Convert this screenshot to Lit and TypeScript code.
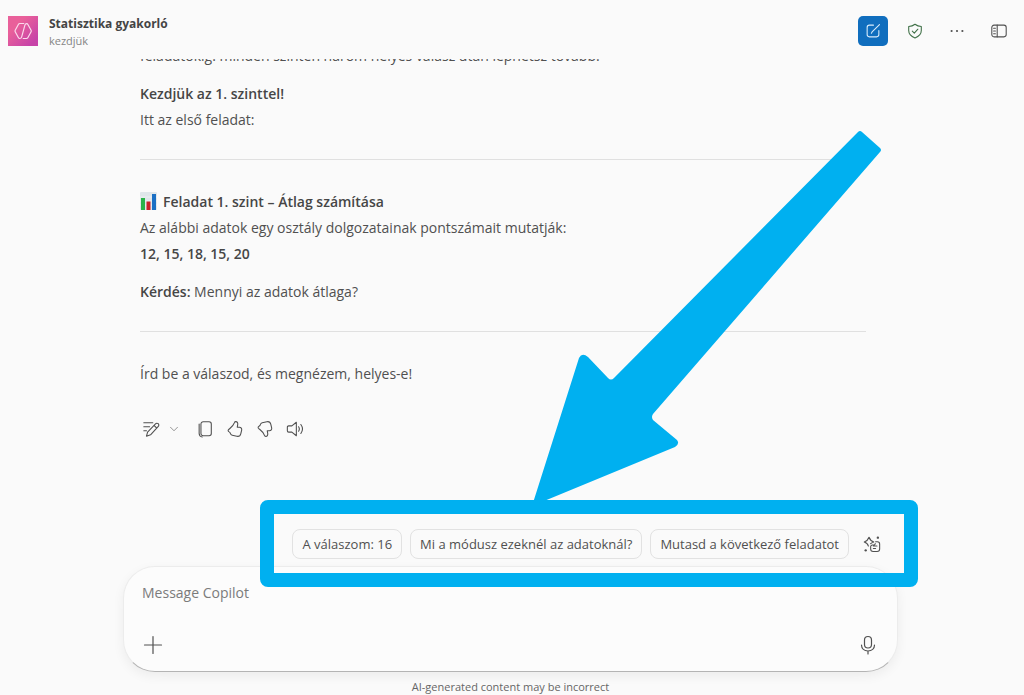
import { LitElement, html, svg, css } from "lit";
import { customElement, state } from "lit/decorators.js";

const stroke = (body: unknown, size = 20) => html`<svg class="icon" width=${size} height=${size} viewBox="0 0 20 20" aria-hidden="true">${body}</svg>`;

const icons = {
  compose: stroke(svg`<path d="M10.500 3.500H6A2.500 2.500 0 0 0 3.500 6v8A2.500 2.500 0 0 0 6 16.500h8a2.500 2.500 0 0 0 2.500-2.500V9.500M9 11l8.200-8.200M9 11l-.8 1.400"/>`, 18),
  shield: stroke(svg`<path d="M10 2.500c2 1.500 4.200 2.300 7 2.500v4.500c0 4-2.500 6.500-7 8.200-4.500-1.700-7-4.200-7-8.200V5c2.800-.2 5-1 7-2.500z"/><path d="M7 10.200l2.200 2.100 4-4.300"/>`, 18),
  more: stroke(svg`<g class="solid"><circle cx="4" cy="10" r="1.200"/><circle cx="10" cy="10" r="1.200"/><circle cx="16" cy="10" r="1.200"/></g>`, 18),
  panel: stroke(svg`<rect x="2" y="3.500" width="16" height="13" rx="2.500"/><path d="M8 3.500v13M4 7h2M4 10h2M4 13h2"/>`, 18),
  edit: stroke(svg`<path d="M2 3h10M2 7.500h6.500M2 12h3M5 18l1.200-4.500L15 4.200a2.100 2.100 0 0 1 3.100 2.900L9.500 16.500zM13.300 6l3 2.900"/>`, 18),
  chevron: stroke(svg`<path d="M3 6.500l7 7 7-7"/>`, 10),
  copy: stroke(svg`<rect x="5.500" y="2" width="11.500" height="15.500" rx="2.500"/><path d="M3.500 4.500v10.500A4 4 0 0 0 7 18.800"/>`, 18),
  up: stroke(svg`<path d="M10.800 1.800c1.900 0 2.500 1.800 2.200 3.500l-.5 2.700h2.300c1.900 0 3 1.500 2.600 3.300l-1 4c-.5 2-2.200 3.200-4.300 2.800l-5.200-1.200c-1.200-.3-1.700-1-2.100-2.100-.4-1-.8-1.400-1.700-1.900-.8-.5-1-1.500-.3-2.200C6 8 8.300 6.500 9.400 3c.2-.7.600-1.200 1.400-1.200z"/>`, 18),
  down: stroke(svg`<path d="M10.800 18.200c1.900 0 2.500-1.800 2.200-3.500l-.5-2.700h2.300c1.900 0 3-1.500 2.600-3.300l-1-4c-.5-2-2.200-3.200-4.300-2.800L6.900 3.100c-1.200.3-1.700 1-2.100 2.100-.4 1-.8 1.400-1.700 1.900-.8.500-1 1.500-.3 2.200C6 12 8.300 13.500 9.400 17c.2.700.600 1.200 1.400 1.200z"/>`, 18),
  speaker: stroke(svg`<path d="M11.500 2.500v15L6.500 13.500H3A1.500 1.500 0 0 1 1.500 12V8A1.500 1.500 0 0 1 3 6.500h3.500zM14 7.500c1 1.500 1 3.500 0 5M16.500 5c2.200 3 2.200 7 0 10"/>`, 18),
  plus: stroke(svg`<path d="M10 1.500v17M1.500 10h17"/>`, 20),
  mic: stroke(svg`<rect x="6.500" y="1.500" width="7" height="11.500" rx="3.500"/><path d="M3.500 10c0 3.700 2.800 6 6.500 6s6.500-2.300 6.500-6M10 16v3"/>`, 20),
  sparkle: stroke(svg`<path d="M6 12.300c-.6-2.600-1.700-3.600-4.600-4.600 2.900-1 4.300-2.300 5.300-5.200 1 2.900 2.300 4.200 5.300 5.200-1.700.6-2.700 1-3.500 1.900M14 7.500h2a2.500 2.500 0 0 1 2.500 2.500v5.500A2.800 2.800 0 0 1 15.700 18.300h-4.400A2.800 2.800 0 0 1 8.500 15.500V13a1.800 1.800 0 0 1 1.800-1.800h1.500a1.800 1.800 0 0 0 1.800-1.800M11.500 12.300h4M11.500 15h2.500"/><g class="solid"><circle cx="16.500" cy="3" r="1.300"/><circle cx="3" cy="17" r="1.300"/></g>`, 18),
};

const logo = html`<svg class="logo" viewBox="0 0 30 30" aria-hidden="true">
  <defs><linearGradient id="pink" x1="0" y1="0" x2="1" y2="1"><stop offset=".3" stop-color="#e9609a"/><stop offset=".85" stop-color="#c743a8"/></linearGradient></defs>
  <rect width="30" height="30" fill="url(#pink)"/>
  <path d="M15.800 7.500h-4a1.500 1.500 0 0 0-1.300.8l-3.300 6a1.500 1.500 0 0 0 0 1.400l3.300 6a1.500 1.500 0 0 0 1.300.8c1 0 1.500-.5 1.800-1.400l3.300-12c.3-.9.800-1.400 1.700-1.400a1.500 1.500 0 0 1 1.300.8l3.200 5.800a1.500 1.500 0 0 1 0 1.400l-3.300 6a1.500 1.500 0 0 1-1.300.8h-3.300" fill="none" stroke="#fbd9ec" stroke-width="1.200" stroke-linecap="round"/>
</svg>`;

const chart = html`<svg class="chart" viewBox="0 0 17 18" role="img" aria-label="oszlopdiagram">
  <rect width="17" height="18" rx="1" fill="#dfe6ea"/>
  <path d="M0 5h17M0 9h17M0 13h17" stroke="#f0f3f5" stroke-width=".8"/>
  <rect x="1" y="6" width="4" height="12" fill="#2bb34a"/><rect x="6.500" y="9.500" width="4" height="8.500" fill="#cc2229"/><rect x="12" y="2" width="4" height="16" fill="#1a6fc4"/>
</svg>`;

@customElement("app-root")
export class AppRoot extends LitElement {
  @state() private draft = "";

  private suggestions = ["A válaszom: 16", "Mi a módusz ezeknél az adatoknál?", "Mutasd a következő feladatot"];

  static styles = css`
    :host {
      display: flex; flex-direction: column; height: 100vh; overflow: hidden;
      background: #fafafa; color: #505050;
      font: 14px/26px "Open Sans", "Noto Sans", sans-serif;
    }
    * { box-sizing: border-box; }
    button { font: inherit; color: inherit; background: none; border: 0; padding: 0; cursor: pointer; display: grid; place-items: center; }
    .icon { display: block; fill: none; stroke: currentColor; stroke-width: 1.2; stroke-linecap: round; stroke-linejoin: round; }
    .solid { fill: currentColor; stroke: none; }
    header { flex: none; display: flex; align-items: flex-start; gap: 11px; height: 59px; padding: 16px 10px 0 8px; }
    .logo { width: 30px; height: 30px; display: block; }
    .agent { flex: 1; min-width: 0; }
    h1 { margin: 0; font-size: 12px; line-height: 16px; font-weight: 700; color: #444; }
    .sub { margin: 0; font-size: 11px; line-height: 18px; color: #858585; }
    .tools { display: flex; gap: 12px; }
    .tools button { width: 30px; height: 30px; border-radius: 5px; }
    .tools .primary { background: #106ebe; color: #d9ecfb; }
    .tools .shield { color: #3f7047; }
    main { flex: 1; min-height: 0; overflow: hidden; display: flex; flex-direction: column; justify-content: flex-end; padding: 0 38px 0 20px; }
    article { width: 100%; max-width: 726px; margin: 0 auto; padding: 0 0 90px; }
    p { margin: 0 0 12px; }
    b { font-weight: 600; color: #464646; }
    hr { border: 0; border-top: 1px solid #e0e0e0; margin: 26px 0 29px; }
    .chart { width: 17px; height: 18px; vertical-align: -3px; margin-right: 6px; }
    .actions { display: flex; gap: 12px; padding-top: 20px; margin-left: 2px; }
    .actions button { width: 18px; height: 20px; }
    .actions .menu { width: 10px; margin: 0 5px 0 -3px; }
    footer { flex: none; width: 100%; max-width: 778px; margin: 0 auto; padding-right: 3px; position: relative; }
    .chips { display: flex; justify-content: flex-end; gap: 8px; padding: 0 11px 7px 0; }
    .chip { height: 30px; padding: 0 9px; border: 1px solid #e2e2e2; border-radius: 8px; font-size: 13px; line-height: 18px; white-space: nowrap; }
    .refresh { width: 30px; height: 30px; }
    .composer { border: 1px solid #ececec; border-bottom-color: #b4b4b4; border-radius: 32px; background: #fcfcfc; padding: 13px 18px 16px; box-shadow: 0 4px 12px #0000000f; }
    textarea { display: block; width: 100%; height: 26px; border: 0; padding: 0; outline: 0; resize: none; overflow: hidden; background: none; font: inherit; color: inherit; }
    textarea::placeholder { color: #7b7b7b; opacity: 1; }
    .row { display: flex; justify-content: space-between; padding: 29px 1px 0; }
    .note { margin: 7px 0 0; height: 16px; text-align: center; font-size: 11px; line-height: 16px; color: #666; }
    .frame { position: absolute; left: 137px; right: -17px; top: -29px; height: 87px; border: 14px solid #00b0f0; border-radius: 8px; pointer-events: none; }
    .arrow { position: absolute; left: 400px; top: -409px; width: 370px; height: 386px; pointer-events: none; fill: #00b0f0; }
  `;

  render() {
    return html`
      <header>
        ${logo}
        <div class="agent"><h1>Statisztika gyakorló</h1><p class="sub">kezdjük</p></div>
        <div class="tools">
          <button class="primary" aria-label="New chat">${icons.compose}</button>
          <button class="shield" aria-label="Protection">${icons.shield}</button>
          <button aria-label="More">${icons.more}</button>
          <button aria-label="Side panel">${icons.panel}</button>
        </div>
      </header>
      <main>
        <article>
          <p>feladatokig. minden szinten három helyes válasz után léphetsz tovább.</p>
          <p><b>Kezdjük az 1. szinttel!</b><br />Itt az első feladat:</p>
          <hr />
          <p>${chart}<b>Feladat 1. szint – Átlag számítása</b><br />Az alábbi adatok egy osztály dolgozatainak pontszámait mutatják:<br /><b>12, 15, 18, 15, 20</b></p>
          <p><b>Kérdés:</b> Mennyi az adatok átlaga?</p>
          <hr />
          <p>Írd be a válaszod, és megnézem, helyes-e!</p>
          <div class="actions">
            <button aria-label="Edit">${icons.edit}</button>
            <button class="menu" aria-label="Edit options">${icons.chevron}</button>
            <button aria-label="Copy">${icons.copy}</button>
            <button aria-label="Like">${icons.up}</button>
            <button aria-label="Dislike">${icons.down}</button>
            <button aria-label="Read aloud">${icons.speaker}</button>
          </div>
        </article>
      </main>
      <footer>
        <div class="chips">
          ${this.suggestions.map((s) => html`<button class="chip" @click=${() => (this.draft = s)}>${s}</button>`)}
          <button class="refresh" aria-label="More prompts">${icons.sparkle}</button>
        </div>
        <div class="composer">
          <textarea aria-label="Message Copilot" placeholder="Message Copilot" .value=${this.draft}
            @input=${(e: Event) => (this.draft = (e.target as HTMLTextAreaElement).value)}></textarea>
          <div class="row">
            <button aria-label="Add">${icons.plus}</button>
            <button aria-label="Dictate">${icons.mic}</button>
          </div>
        </div>
        <p class="note">AI-generated content may be incorrect</p>
        <div class="frame"></div>
        <svg class="arrow" viewBox="523 120 370 386" aria-hidden="true">
          <path d="M858 132Q860 130 862 132L880 148Q882 150 880 152L653 414Q651 417 653 420L677 440Q680 444 675 447L532 506L579 358Q582 352 588 357L608 378Q611 381 614 378Z"/>
        </svg>
      </footer>
    `;
  }
}
